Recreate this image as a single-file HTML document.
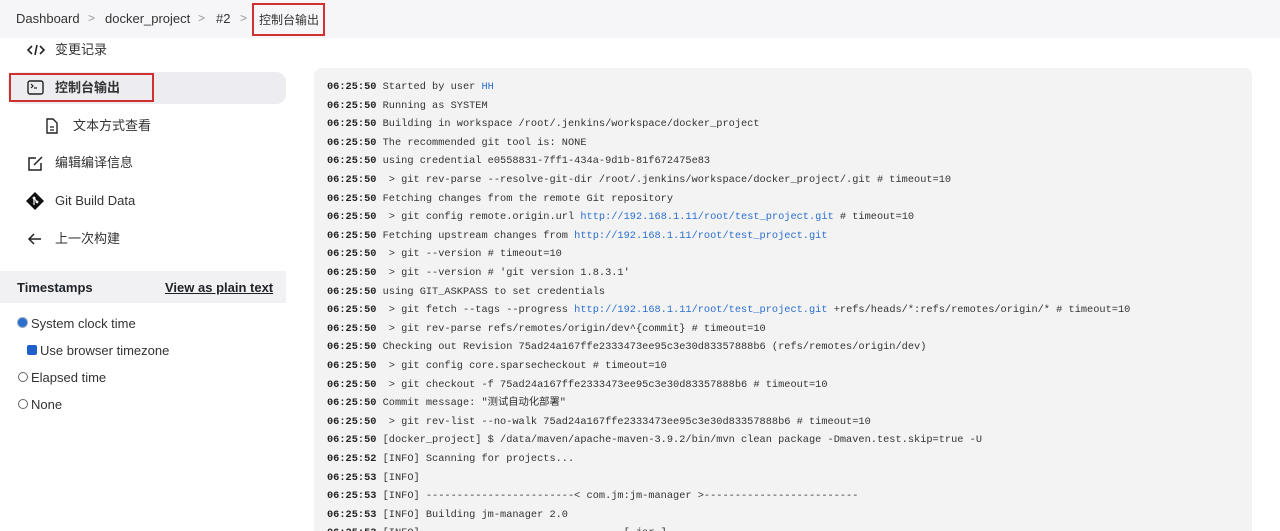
<!DOCTYPE html>
<html style="overflow:hidden;height:531px"><head><meta charset="utf-8"><style>
body{margin:0;width:1280px;height:531px;overflow:hidden;background:#fff;font-family:"Liberation Sans","Noto Sans CJK SC",sans-serif;color:#1f2328;position:relative}
.hdr{position:absolute;left:0;top:0;width:1280px;height:38px;background:#f6f6f8}
.bc{position:absolute;top:11px;font-size:13px;color:#333}
.sep{position:absolute;top:11px;font-size:12px;color:#999}
.item{position:absolute;left:27px;font-size:13px;color:#333;line-height:16px}
.item .t{position:absolute;left:28px;top:0;white-space:nowrap}
.log{position:absolute;left:314px;top:68px;width:938px;height:470px;background:#f3f3f3;border-radius:8px}
.ln{position:absolute;left:327px;font-family:"Liberation Mono","Noto Sans CJK SC",monospace;font-size:10.3px;line-height:13px;height:13px;white-space:pre;color:#333}
.ln b{color:#222}
.ln a{color:#2a6fd0;text-decoration:none}
</style></head><body>
<div class="hdr"></div>
<span class="bc" style="left:16px">Dashboard</span>
<span class="sep" style="left:88px">&gt;</span>
<span class="bc" style="left:105px">docker_project</span>
<span class="sep" style="left:198px">&gt;</span>
<span class="bc" style="left:216px">#2</span>
<span class="sep" style="left:240px">&gt;</span>
<div style="position:absolute;left:252px;top:3px;width:73px;height:33px;border:2px solid #d03030;box-sizing:border-box"></div>
<span class="bc" style="left:259px;font-size:12px;top:11px">控制台输出</span>

<div class="item" style="top:42px"><svg width="18" height="14" viewBox="0 0 18 14" style="position:absolute;left:0;top:1px"><path d="M5 3L1 7l4 4M13 3l4 4-4 4M10 2L8 12" stroke="#222" stroke-width="1.6" fill="none"/></svg><span class="t">变更记录</span></div>

<div style="position:absolute;left:8px;top:72px;width:278px;height:32px;background:#ededf1;border-radius:10px"></div>
<div style="position:absolute;left:9px;top:73px;width:145px;height:29px;border:2px solid #d03030;box-sizing:border-box"></div>
<div class="item" style="top:80px;font-weight:bold"><svg width="17" height="15" viewBox="0 0 17 15" style="position:absolute;left:0;top:0"><rect x="1" y="1" width="15" height="13" rx="2" stroke="#222" stroke-width="1.4" fill="none"/><path d="M4 4l2 2-2 2M7 8h3" stroke="#222" stroke-width="1.2" fill="none"/></svg><span class="t">控制台输出</span></div>

<div class="item" style="top:118px;left:45px"><svg width="14" height="16" viewBox="0 0 14 16" style="position:absolute;left:0;top:0"><path d="M2 1h6l4 4v10H2z" stroke="#222" stroke-width="1.4" fill="none"/><path d="M5 9h4M5 12h4" stroke="#222" stroke-width="1.3"/></svg><span class="t">文本方式查看</span></div>

<div class="item" style="top:155px"><svg width="17" height="16" viewBox="0 0 17 16" style="position:absolute;left:0;top:0"><path d="M9 3H2v12h12V8" stroke="#222" stroke-width="1.5" fill="none"/><path d="M7 10l8-8" stroke="#222" stroke-width="1.5"/></svg><span class="t">编辑编译信息</span></div>

<div class="item" style="top:193px"><svg width="18" height="18" viewBox="0 0 18 18" style="position:absolute;left:-1px;top:-1px"><path d="M9 0L18 9 9 18 0 9z" fill="#111"/><circle cx="8" cy="6" r="1.4" fill="#fff"/><circle cx="11" cy="10" r="1.4" fill="#fff"/><path d="M8 6v7M8 6l3 4" stroke="#fff" stroke-width="1.2"/></svg><span class="t">Git Build Data</span></div>

<div class="item" style="top:231px"><svg width="16" height="14" viewBox="0 0 16 14" style="position:absolute;left:0;top:1px"><path d="M7 2L2 7l5 5M2 7h12" stroke="#222" stroke-width="1.5" fill="none"/></svg><span class="t">上一次构建</span></div>

<div style="position:absolute;left:0;top:271px;width:286px;height:32px;background:#f1f1f4"></div>
<span style="position:absolute;left:17px;top:280px;font-size:13px;font-weight:bold">Timestamps</span>
<span style="position:absolute;left:165px;top:280px;font-size:13px;font-weight:bold;text-decoration:underline">View as plain text</span>

<div style="position:absolute;left:18px;top:318px;width:9px;height:9px;border-radius:50%;background:#2a6fd0;box-shadow:0 0 0 1px #9ab"></div>
<span style="position:absolute;left:31px;top:316px;font-size:13px;color:#333">System clock time</span>
<div style="position:absolute;left:27px;top:345px;width:10px;height:10px;border-radius:2px;background:#1f5fcc"></div>
<span style="position:absolute;left:40px;top:343px;font-size:13px;color:#333">Use browser timezone</span>
<div style="position:absolute;left:18px;top:372px;width:8px;height:8px;border-radius:50%;border:1px solid #666"></div>
<span style="position:absolute;left:31px;top:370px;font-size:13px;color:#333">Elapsed time</span>
<div style="position:absolute;left:18px;top:399px;width:8px;height:8px;border-radius:50%;border:1px solid #666"></div>
<span style="position:absolute;left:31px;top:397px;font-size:13px;color:#333">None</span>

<div class="log"></div>
<div class="ln" style="top:81px"><b>06:25:50</b> Started by user <a>HH</a></div>
<div class="ln" style="top:99.6px"><b>06:25:50</b> Running as SYSTEM</div>
<div class="ln" style="top:118.2px"><b>06:25:50</b> Building in workspace /root/.jenkins/workspace/docker_project</div>
<div class="ln" style="top:136.8px"><b>06:25:50</b> The recommended git tool is: NONE</div>
<div class="ln" style="top:155.4px"><b>06:25:50</b> using credential e0558831-7ff1-434a-9d1b-81f672475e83</div>
<div class="ln" style="top:174px"><b>06:25:50</b>  &gt; git rev-parse --resolve-git-dir /root/.jenkins/workspace/docker_project/.git # timeout=10</div>
<div class="ln" style="top:192.6px"><b>06:25:50</b> Fetching changes from the remote Git repository</div>
<div class="ln" style="top:211.2px"><b>06:25:50</b>  &gt; git config remote.origin.url <a>http://192.168.1.11/root/test_project.git</a> # timeout=10</div>
<div class="ln" style="top:229.8px"><b>06:25:50</b> Fetching upstream changes from <a>http://192.168.1.11/root/test_project.git</a></div>
<div class="ln" style="top:248.4px"><b>06:25:50</b>  &gt; git --version # timeout=10</div>
<div class="ln" style="top:267px"><b>06:25:50</b>  &gt; git --version # 'git version 1.8.3.1'</div>
<div class="ln" style="top:285.6px"><b>06:25:50</b> using GIT_ASKPASS to set credentials</div>
<div class="ln" style="top:304.2px"><b>06:25:50</b>  &gt; git fetch --tags --progress <a>http://192.168.1.11/root/test_project.git</a> +refs/heads/*:refs/remotes/origin/* # timeout=10</div>
<div class="ln" style="top:322.8px"><b>06:25:50</b>  &gt; git rev-parse refs/remotes/origin/dev^{commit} # timeout=10</div>
<div class="ln" style="top:341.4px"><b>06:25:50</b> Checking out Revision 75ad24a167ffe2333473ee95c3e30d83357888b6 (refs/remotes/origin/dev)</div>
<div class="ln" style="top:360px"><b>06:25:50</b>  &gt; git config core.sparsecheckout # timeout=10</div>
<div class="ln" style="top:378.6px"><b>06:25:50</b>  &gt; git checkout -f 75ad24a167ffe2333473ee95c3e30d83357888b6 # timeout=10</div>
<div class="ln" style="top:397.2px"><b>06:25:50</b> Commit message: "测试自动化部署"</div>
<div class="ln" style="top:415.8px"><b>06:25:50</b>  &gt; git rev-list --no-walk 75ad24a167ffe2333473ee95c3e30d83357888b6 # timeout=10</div>
<div class="ln" style="top:434.4px"><b>06:25:50</b> [docker_project] $ /data/maven/apache-maven-3.9.2/bin/mvn clean package -Dmaven.test.skip=true -U</div>
<div class="ln" style="top:453px"><b>06:25:52</b> [INFO] Scanning for projects...</div>
<div class="ln" style="top:471.6px"><b>06:25:53</b> [INFO]</div>
<div class="ln" style="top:490.2px"><b>06:25:53</b> [INFO] ------------------------&lt; com.jm:jm-manager &gt;-------------------------</div>
<div class="ln" style="top:508.8px"><b>06:25:53</b> [INFO] Building jm-manager 2.0</div>
<div class="ln" style="top:527.4px"><b>06:25:53</b> [INFO] --------------------------------[ jar ]---------------------------------</div>
</body></html>
